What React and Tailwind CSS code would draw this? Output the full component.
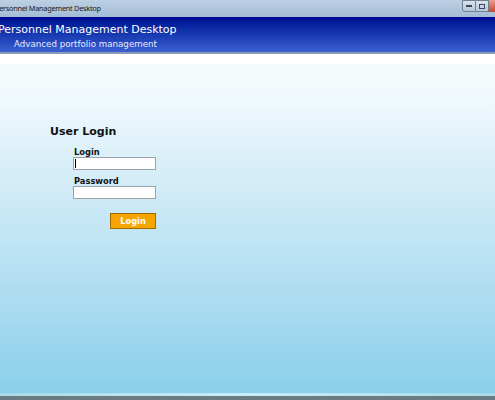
export default function App() {
  return (
    <div className="w-[495px] h-[400px] overflow-hidden flex flex-col relative bg-white">
      {/* window title bar */}
      <div className="h-[17px] shrink-0 bg-gradient-to-b from-[#bccfe3] to-[#a3bdd6] flex items-center relative">
        <span className="ml-[-5px] text-[7.4px] tracking-[-0.3px] text-[#1a1a1a] whitespace-nowrap" style={{ fontFamily: '"Noto Sans", "DejaVu Sans", sans-serif' }}>
          Personnel Management Desktop
        </span>
        <div className="absolute right-0 top-0 flex">
          <div className="w-[14px] h-[12px] border border-[#6f7f90] rounded-bl-[3px] bg-gradient-to-b from-[#d9e4ee] to-[#b5c7d9] flex items-center justify-center">
            <div className="w-[6px] h-[2px] bg-[#3a4a5a]" />
          </div>
          <div className="w-[13px] h-[12px] border border-l-0 border-[#6f7f90] bg-gradient-to-b from-[#d9e4ee] to-[#b5c7d9] flex items-center justify-center">
            <div className="w-[6px] h-[5px] border border-[#3a4a5a]" />
          </div>
          <div className="w-[6px] h-[12px] bg-gradient-to-b from-[#e8a08a] to-[#c7432a]" />
        </div>
      </div>
      {/* header */}
      <div className="h-[35px] shrink-0 bg-gradient-to-b from-[#00068f] to-[#3b5ed3] flex flex-col text-white" style={{ fontFamily: '"DejaVu Sans", Verdana, sans-serif' }}>
        <div className="ml-[-2px] mt-[5px] text-[11px] leading-[15px] whitespace-nowrap">Personnel Management Desktop</div>
        <div className="ml-[14px] mt-[1px] text-[8.7px] leading-[12px] whitespace-nowrap text-[#e6ecff]">Advanced portfolio management</div>
      </div>
      <div className="h-[2px] shrink-0 bg-[#8c9bb5]" />
      {/* body */}
      <div className="flex-1 bg-gradient-to-b from-white via-[#dcf0f9] via-30% to-[#8acfea] flex flex-col" style={{ fontFamily: '"DejaVu Sans", Verdana, sans-serif' }}>
        <div className="h-[10px] shrink-0 bg-white" />
        <div className="h-[20px] shrink-0 bg-[#f5fbfb]" />
        <div className="pl-[50px] pt-[40px]">
          <div className="text-[11px] font-bold leading-[16px] text-[#111]">User Login</div>
          <div className="pl-[23px] pt-[8px] flex flex-col">
            <label className="text-[8.3px] font-bold leading-[9px] pl-[1px] text-[#111]">Login</label>
            <div className="w-[83px] h-[13px] bg-white border border-[#9aa3aa] flex items-center pl-[1px]">
              <div className="w-[1px] h-[9px] bg-black" />
            </div>
            <label className="text-[8.3px] font-bold leading-[9px] pl-[1px] mt-[7px] text-[#111]">Password</label>
            <div className="w-[83px] h-[13px] bg-white border border-[#9aa3aa]" />
            <div className="pl-[37px] pt-[14px] flex">
              <button className="w-[46px] h-[16px] bg-[#f6a500] border border-[#a06a00] text-white text-[8.3px] font-bold leading-[14px] text-center">
                Login
              </button>
            </div>
          </div>
        </div>
      </div>
      {/* bottom frame */}
      <div className="h-[3px] shrink-0 bg-gradient-to-r from-[#a9d9ea] via-[#c8eef8] to-[#a9d9ea]" />
      <div className="h-[4px] shrink-0 bg-[#6a7b82]" />
    </div>
  );
}
